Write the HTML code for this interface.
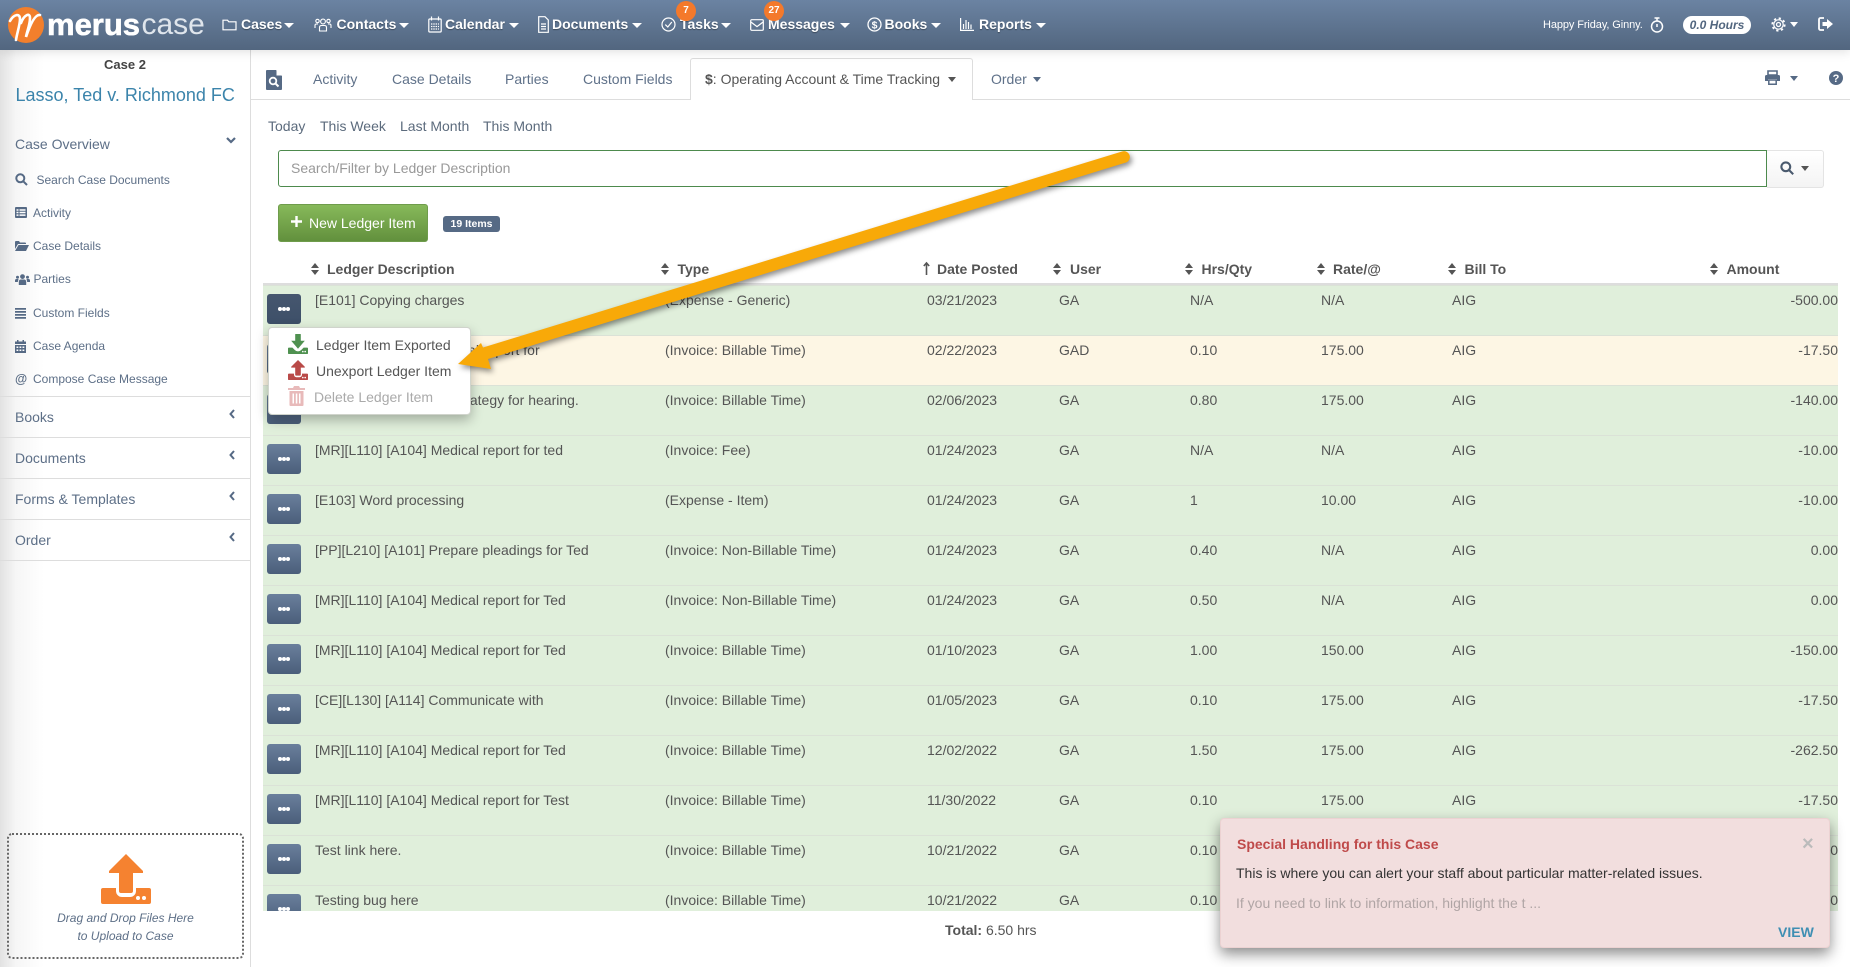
<!DOCTYPE html>
<html lang="en">
<head>
<meta charset="utf-8">
<title>MerusCase</title>
<style>
*{box-sizing:border-box}
html,body{margin:0;padding:0;width:1850px;height:967px;overflow:hidden;background:#fff;font-family:"Liberation Sans",Arial,sans-serif;font-size:14px;color:#555}
.a{position:absolute;white-space:nowrap;line-height:20px}
svg{position:absolute;overflow:visible}
#nav{position:absolute;left:0;top:0;width:1850px;height:50px;background:linear-gradient(#6b83a2,#52667f);box-shadow:0 2px 10px rgba(0,0,0,.12);z-index:3}
.n{position:absolute;top:14px;line-height:20px;color:#fff;font-weight:bold;font-size:14px;white-space:nowrap;text-shadow:0 1px 1px rgba(0,0,0,.35)}
.cw{position:absolute;width:0;height:0;border-left:5px solid transparent;border-right:5px solid transparent;border-top:5px solid #fff}
.bd{position:absolute;width:20px;height:20px;border-radius:50%;background:#f4792b;color:#fff;font-size:10px;font-weight:bold;text-align:center;line-height:20px;z-index:4}
#side{position:absolute;left:0;top:50px;width:251px;height:917px;border-right:1px solid #ddd;background:linear-gradient(90deg,#e2e2e2 0,#f6f6f6 16px,#fff 44px)}
.si{position:absolute;font-size:12px;line-height:20px;color:#5d6f87;white-space:nowrap}
.sh{position:absolute;left:15px;font-size:14px;line-height:20px;color:#5d6f87}
.ln{position:absolute;left:0;width:250px;height:1px;background:#ddd}
.tab{position:absolute;top:69px;line-height:20px;color:#5f7189;white-space:nowrap}
.q{position:absolute;top:116px;line-height:20px;color:#5c6b7d;white-space:nowrap}
.th{position:absolute;top:259px;line-height:20px;font-weight:bold;color:#555;white-space:nowrap}
#t{position:absolute;left:263px;top:285px;width:1575px;height:626px;overflow:hidden}
.r{position:relative;height:50px;background:#e0efdb;border-top:1px solid #dbe2d7}
.r.y{background:#fdf6e4}
.r span{position:absolute;top:-1px;line-height:30px;white-space:nowrap;color:#555}
.b{position:absolute;left:4px;top:8px;width:34px;height:30px;border-radius:3px;background:linear-gradient(#6a7f9c,#4a5e7a)}
.b.d{background:linear-gradient(#46576f,#3d4f68)}
.b i{position:absolute;left:11px;top:13px;width:4px;height:4px;border-radius:50%;background:#fff;box-shadow:4px 0 0 #fff,8px 0 0 #fff}
.c1{left:52px}.c2{left:402px}.c3{left:664px}.c4{left:796px}.c5{left:927px}.c6{left:1058px}.c7{left:1189px}
.r .c8{right:0}
</style>
</head>
<body>
<svg width="0" height="0" style="position:absolute">
<defs>
<symbol id="ul" viewBox="0 0 50 50"><path d="M0 36a2 2 0 0 1 2-2h13v3a6 6 0 0 0 6 6h8a6 6 0 0 0 6-6v-3h13a2 2 0 0 1 2 2v12a2 2 0 0 1-2 2H2a2 2 0 0 1-2-2z"/><path d="M25 0 L42 17 V19 H32 V37 a2 2 0 0 1-2 2 H20 a2 2 0 0 1-2-2 V19 H8 V17z"/><circle cx="37" cy="44" r="2" fill="#fff"/><circle cx="43" cy="44" r="2" fill="#fff"/></symbol>
<symbol id="dl" viewBox="0 0 50 50"><path d="M0 36a2 2 0 0 1 2-2h9l6 6a11 11 0 0 0 16 0l6-6h9a2 2 0 0 1 2 2v12a2 2 0 0 1-2 2H2a2 2 0 0 1-2-2z"/><path d="M19 0h12a1 1 0 0 1 1 1V17h10L25 37 8 17H18V1a1 1 0 0 1 1-1z"/><circle cx="37" cy="44" r="2" fill="#fff"/><circle cx="43" cy="44" r="2" fill="#fff"/></symbol>
<symbol id="sort" viewBox="0 0 8 12"><path d="M4 0 8 5H0zM4 12 0 7H8z"/></symbol>
</defs>
</svg>

<div id="nav">
  <svg style="left:8px;top:7px" width="36" height="36" viewBox="0 0 36 36"><circle cx="18" cy="18" r="18" fill="#f27f2c"/><path d="M2 14C6 7 12 6 12 12C12 18 9 26 8 33M13 16C16 8 22 5 22 11C22 18 19 24 18 30C22 18 27 7 32 8" fill="none" stroke="#fff" stroke-width="2.6" stroke-linecap="round"/></svg>
  <div style="position:absolute;left:47px;top:6px;font-size:31px;line-height:38px;font-weight:bold;color:#fff;white-space:nowrap;-webkit-text-stroke:.6px #fff">merus</div>
  <div style="position:absolute;left:141.500px;top:6px;font-size:30px;line-height:38px;color:#dfe5ec;white-space:nowrap;letter-spacing:0">case</div>

  <svg style="left:222px;top:19px" width="15" height="12" viewBox="0 0 15 12" fill="none" stroke="#fff" stroke-width="1.2"><path d="M1 1.2h4.5l1.3 1.6H14v8H1z"/></svg>
  <div class="n" style="left:241px">Cases</div><div class="cw" style="left:284px;top:23px"></div>

  <svg style="left:314px;top:18px" width="18" height="14" viewBox="0 0 18 14" fill="none" stroke="#fff" stroke-width="1.1"><circle cx="9" cy="3.5" r="2.4"/><circle cx="3.5" cy="3" r="1.7"/><circle cx="14.5" cy="3" r="1.7"/><path d="M5.5 13v-3.5q0-2 2-2h3q2 0 2 2V13zM1 10V7.5q0-1.5 1.5-1.5h1.5M17 10V7.5q0-1.5-1.5-1.5H14"/></svg>
  <div class="n" style="left:336.500px">Contacts</div><div class="cw" style="left:399px;top:23px"></div>

  <svg style="left:428px;top:16px" width="14" height="17" viewBox="0 0 14 17" fill="none" stroke="#fff" stroke-width="1.2"><rect x=".8" y="3" width="12.4" height="13" rx="1"/><path d="M3.5 .5v4M10.5 .5v4"/><path d="M3 8h8M3 10.5h8M3 13h8" stroke-dasharray="1.4 .9"/></svg>
  <div class="n" style="left:445px">Calendar</div><div class="cw" style="left:509px;top:23px"></div>

  <svg style="left:538px;top:16px" width="11" height="17" viewBox="0 0 11 17" fill="none" stroke="#fff" stroke-width="1.2"><path d="M.7.7H7l3.3 3.3v12.3H.7z"/><path d="M3 8h5M3 10.5h5M3 13h5" stroke-width="1.3"/></svg>
  <div class="n" style="left:552px">Documents</div><div class="cw" style="left:632px;top:23px"></div>

  <svg style="left:661px;top:17px" width="15" height="15" viewBox="0 0 15 15" fill="none" stroke="#fff" stroke-width="1.2"><circle cx="7.5" cy="7.5" r="6.5"/><path d="M4.3 7.6 6.8 10 10.8 5"/></svg>
  <div class="n" style="left:680px">Tasks</div><div class="cw" style="left:721px;top:23px"></div>
  <div class="bd" style="left:676px;top:1px">7</div>

  <svg style="left:750px;top:18px" width="14" height="14" viewBox="0 0 14 14" fill="none" stroke="#fff" stroke-width="1.2"><rect x=".7" y="1.7" width="12.6" height="10.6" rx="1"/><path d="M.9 4 7 8.6 13.100 4"/></svg>
  <div class="n" style="left:768px">Messages</div><div class="cw" style="left:840px;top:23px"></div>
  <div class="bd" style="left:764px;top:1px">27</div>

  <svg style="left:867px;top:17px" width="15" height="15" viewBox="0 0 15 15"><circle cx="7.5" cy="7.500" r="6.500" fill="none" stroke="#fff" stroke-width="1.300"/><text x="7.500" y="11.300" font-size="10.500" font-weight="bold" text-anchor="middle" fill="#fff" font-family="Liberation Sans">$</text></svg>
  <div class="n" style="left:884.500px">Books</div><div class="cw" style="left:931px;top:23px"></div>

  <svg style="left:960px;top:18px" width="14" height="13" viewBox="0 0 14 13" fill="none" stroke="#fff" stroke-width="1.2"><path d="M.6 0v12.400H14"/><path d="M3.500 11V6M6 11V2M8.500 11V4M11 11V6.500"/></svg>
  <div class="n" style="left:979px">Reports</div><div class="cw" style="left:1036px;top:23px"></div>

  <div class="a" style="left:1543px;top:15px;color:#fff;font-size:11px;letter-spacing:-.1px">Happy Friday, Ginny.</div>
  <svg style="left:1650px;top:17px" width="14" height="16" viewBox="0 0 14 16" fill="none" stroke="#fff" stroke-width="1.500"><circle cx="7" cy="9.500" r="5.500"/><path d="M4.500 1h5M7 1v3M7 7v3"/></svg>
  <div style="position:absolute;left:1683px;top:16px;width:68px;height:18px;border-radius:9px;background:#fff;color:#52667f;font-style:italic;font-weight:bold;font-size:12px;line-height:18px;text-align:center">0.0 Hours</div>
  <svg style="left:1771px;top:17px" width="15" height="15" viewBox="0 0 15 15" fill="none" stroke="#fff"><circle cx="7.500" cy="7.500" r="2" stroke-width="1.300"/><circle cx="7.500" cy="7.500" r="4.700" stroke-width="1.200"/><circle cx="7.500" cy="7.500" r="6.200" stroke-width="1.800" stroke-dasharray="2.200 2.670"/></svg>
  <div class="cw" style="left:1790px;top:22px;border-left-width:4px;border-right-width:4px"></div>
  <svg style="left:1818px;top:17px" width="15" height="14" viewBox="0 0 15 14"><path d="M6 1H2.500A1.500 1.500 0 0 0 1 2.500v9A1.500 1.500 0 0 0 2.500 13H6" fill="none" stroke="#fff" stroke-width="1.800"/><path d="M9 2l6 5-6 5V9H4.500V5H9z" fill="#fff"/></svg>
</div>

<div id="side">
  <div style="position:absolute;left:0;width:250px;top:5px;text-align:center;font-weight:bold;font-size:13px;line-height:20px;color:#444">Case 2</div>
  <div style="position:absolute;left:15.500px;top:34px;font-size:18px;line-height:22px;color:#3b84ab;white-space:nowrap">Lasso, Ted v. Richmond FC</div>

  <div class="sh" style="top:84px">Case Overview</div>
  <svg style="left:226px;top:87px" width="10" height="7" viewBox="0 0 10 7" fill="none" stroke="#566a85" stroke-width="2.200"><path d="M1 1l4 4 4-4"/></svg>

  <svg style="left:15px;top:123px" width="13" height="13" viewBox="0 0 13 13" fill="none" stroke="#566a85" stroke-width="2"><circle cx="5.300" cy="5.300" r="4"/><path d="M8.300 8.300 12 12"/></svg>
  <div class="si" style="left:36.500px;top:120px">Search Case Documents</div>

  <svg style="left:15px;top:157px" width="12" height="11" viewBox="0 0 12 11"><rect width="12" height="11" rx="1" fill="#566a85"/><path d="M1.500 2.200h2v1.500h-2zM4.500 2.200h6v1.500h-6zM1.500 4.800h2v1.500h-2zM4.500 4.800h6v1.500h-6zM1.500 7.400h2v1.500h-2zM4.500 7.400h6v1.500h-6z" fill="#fff"/></svg>
  <div class="si" style="left:33px;top:153px">Activity</div>

  <svg style="left:15px;top:191px" width="14" height="10" viewBox="0 0 14 10" fill="#566a85"><path d="M0 1q0-1 1-1h3l1 1.500h5q1 0 1 1v.5H3L0 8z"/><path d="M3.500 4H14l-3 6H0z"/></svg>
  <div class="si" style="left:33px;top:186px">Case Details</div>

  <svg style="left:15px;top:224px" width="15" height="11" viewBox="0 0 15 11" fill="#566a85"><circle cx="7.500" cy="2.600" r="2.400"/><circle cx="2.500" cy="3.200" r="1.500"/><circle cx="12.500" cy="3.200" r="1.500"/><path d="M3.800 11V8q0-2.500 2.200-2.500h3q2.200 0 2.200 2.500v3zM0 8V6.500q0-1.500 1.500-1.500h2L2.800 8zM15 8V6.500Q15 5 13.500 5h-2l.7 3z"/></svg>
  <div class="si" style="left:33.500px;top:219px">Parties</div>

  <svg style="left:15px;top:258px" width="11" height="11" viewBox="0 0 11 11" fill="#566a85"><path d="M0 0h11v1.700H0zM0 3h11v1.700H0zM0 6h11v1.700H0zM0 9h11v1.700H0z"/></svg>
  <div class="si" style="left:33px;top:253px">Custom Fields</div>

  <svg style="left:15px;top:290px" width="11" height="13" viewBox="0 0 11 13" fill="#566a85"><path d="M2 0h1.500v2H2zM7.500 0H9v2H7.500zM0 1.500h11V4H0zM0 5h11v8H0z"/><path d="M1.500 6.500h1.800v1.500H1.500zM4.500 6.500h1.800v1.500H4.500zM7.500 6.500h1.800v1.500H7.500zM1.500 9.500h1.800v1.500H1.500zM4.500 9.500h1.800v1.500H4.500zM7.500 9.500h1.800v1.500H7.500z" fill="#fff"/></svg>
  <div class="si" style="left:33px;top:286px">Case Agenda</div>

  <div class="si" style="left:15px;top:319px;font-weight:bold;font-size:12.500px">@</div>
  <div class="si" style="left:33px;top:319px">Compose Case Message</div>

  <div class="ln" style="top:346px"></div>
  <div class="sh" style="top:357px">Books</div>
  <div class="ln" style="top:387px"></div>
  <div class="sh" style="top:398px">Documents</div>
  <div class="ln" style="top:428px"></div>
  <div class="sh" style="top:439px">Forms &amp; Templates</div>
  <div class="ln" style="top:469px"></div>
  <div class="sh" style="top:480px">Order</div>
  <div class="ln" style="top:510px"></div>
  <svg style="left:229px;top:359px" width="6" height="10" viewBox="0 0 6 10" fill="none" stroke="#566a85" stroke-width="2"><path d="M5 1 1.500 5 5 9"/></svg>
  <svg style="left:229px;top:400px" width="6" height="10" viewBox="0 0 6 10" fill="none" stroke="#566a85" stroke-width="2"><path d="M5 1 1.500 5 5 9"/></svg>
  <svg style="left:229px;top:441px" width="6" height="10" viewBox="0 0 6 10" fill="none" stroke="#566a85" stroke-width="2"><path d="M5 1 1.500 5 5 9"/></svg>
  <svg style="left:229px;top:482px" width="6" height="10" viewBox="0 0 6 10" fill="none" stroke="#566a85" stroke-width="2"><path d="M5 1 1.500 5 5 9"/></svg>

  <div style="position:absolute;left:7px;top:783px;width:237px;height:126px;border:2px dotted #666;border-radius:5px"></div>
  <svg style="left:101px;top:804px" width="50" height="50" fill="#f58230"><use href="#ul"/></svg>
  <div style="position:absolute;left:7px;width:237px;top:859px;text-align:center;font-style:italic;font-size:12px;line-height:18px;color:#5d6f87">Drag and Drop Files Here<br>to Upload to Case</div>
</div>

<!-- sub tabs -->
<div style="position:absolute;left:251px;top:99px;width:1599px;height:1px;background:#ddd"></div>
<div style="position:absolute;left:690px;top:58px;width:283px;height:42px;background:#fff;border:1px solid #ddd;border-bottom:0;border-radius:3px 3px 0 0"></div>
<svg style="left:266px;top:70px" width="16" height="20" viewBox="0 0 16 20"><path d="M0 1q0-1 1-1h9l6 6v13q0 1-1 1H1q-1 0-1-1z" fill="#566a85"/><circle cx="7" cy="11" r="3.300" fill="none" stroke="#fff" stroke-width="1.800"/><path d="M9.500 13.500 12.500 16.500" stroke="#fff" stroke-width="2"/><path d="M10.500 0 16 5.500H10.500z" fill="#fff"/></svg>
<div class="tab" style="left:313px">Activity</div>
<div class="tab" style="left:392px">Case Details</div>
<div class="tab" style="left:505px">Parties</div>
<div class="tab" style="left:583px">Custom Fields</div>
<div class="tab" style="left:705px;color:#555"><b>$</b>: Operating Account &amp; Time Tracking</div>
<div class="cw" style="left:948px;top:77px;border-top-color:#555;border-left-width:4.500px;border-right-width:4.500px"></div>
<div class="tab" style="left:991px">Order</div>
<div class="cw" style="left:1033px;top:77px;border-top-color:#566a85;border-left-width:4.500px;border-right-width:4.500px"></div>
<svg style="left:1765px;top:71px" width="15" height="14" viewBox="0 0 15 14" fill="#566a85"><path d="M3 0h9v4H3z" fill="none" stroke="#566a85" stroke-width="1.600"/><path d="M1.500 4h12Q15 4 15 5.500V10H12V8H3v2H0V5.500Q0 4 1.500 4z"/><path d="M3.800 9h7.400v4.300H3.800z" fill="none" stroke="#566a85" stroke-width="1.500"/></svg>
<div class="cw" style="left:1790px;top:76px;border-top-color:#566a85;border-left-width:4.500px;border-right-width:4.500px"></div>
<svg style="left:1829px;top:71px" width="14" height="14" viewBox="0 0 14 14"><circle cx="7" cy="7" r="7" fill="#566a85"/><text x="7" y="11" font-size="11" font-weight="bold" text-anchor="middle" fill="#fff" font-family="Liberation Sans">?</text></svg>

<div class="q" style="left:268px">Today</div>
<div class="q" style="left:320px">This Week</div>
<div class="q" style="left:400px">Last Month</div>
<div class="q" style="left:483px">This Month</div>

<!-- search -->
<div style="position:absolute;left:278px;top:150px;width:1489px;height:37px;border:1px solid #4d8a4d;border-radius:3px 0 0 3px;background:#fff;color:#999;line-height:35px;padding-left:12px">Search/Filter by Ledger Description</div>
<div style="position:absolute;left:1767px;top:150px;width:57px;height:38px;border:1px solid #e4e4e4;border-left:0;border-radius:0 3px 3px 0;background:linear-gradient(#fff,#f4f4f4)"></div>
<svg style="left:1780px;top:161px" width="14" height="14" viewBox="0 0 14 14" fill="none" stroke="#4a5a6e" stroke-width="2.100"><circle cx="5.800" cy="5.800" r="4.400"/><path d="M9 9l4.200 4.200"/></svg>
<div class="cw" style="left:1801px;top:166px;border-top-color:#555;border-left-width:4.500px;border-right-width:4.500px"></div>

<!-- new button -->
<div style="position:absolute;left:278px;top:204px;width:150px;height:38px;border-radius:3px;background:linear-gradient(#87b95a,#62903d);border:1px solid #6f9c4c;color:#fff;line-height:36px;padding-left:30px;white-space:nowrap">New Ledger Item</div>
<svg style="left:291px;top:216px" width="11" height="11" viewBox="0 0 11 11"><path d="M4.300 0h2.400v4.300H11v2.400H6.700V11H4.300V6.700H0V4.300h4.300z" fill="#fff"/></svg>
<div style="position:absolute;left:443px;top:216px;width:57px;height:16px;border-radius:3px;background:#566a85;color:#fff;font-weight:bold;font-size:10.500px;line-height:16px;text-align:center">19 Items</div>

<!-- header -->
<svg style="left:311px;top:263px" width="8" height="12" fill="#555"><use href="#sort"/></svg><div class="th" style="left:327px">Ledger Description</div>
<svg style="left:661px;top:263px" width="8" height="12" fill="#555"><use href="#sort"/></svg><div class="th" style="left:677.500px">Type</div>
<svg style="left:923px;top:262px" width="7" height="13" viewBox="0 0 7 13" fill="none" stroke="#555" stroke-width="1.600"><path d="M3.500 13V1.500M.8 4 3.500 1 6.200 4"/></svg><div class="th" style="left:937px">Date Posted</div>
<svg style="left:1053px;top:263px" width="8" height="12" fill="#555"><use href="#sort"/></svg><div class="th" style="left:1070px">User</div>
<svg style="left:1185px;top:263px" width="8" height="12" fill="#555"><use href="#sort"/></svg><div class="th" style="left:1201.500px">Hrs/Qty</div>
<svg style="left:1317px;top:263px" width="8" height="12" fill="#555"><use href="#sort"/></svg><div class="th" style="left:1333px">Rate/@</div>
<svg style="left:1448px;top:263px" width="8" height="12" fill="#555"><use href="#sort"/></svg><div class="th" style="left:1464.500px">Bill To</div>
<svg style="left:1710px;top:263px" width="8" height="12" fill="#555"><use href="#sort"/></svg><div class="th" style="left:1726.500px">Amount</div>
<div style="position:absolute;left:263px;top:283px;width:1575px;height:2px;background:#ddd"></div>

<!-- rows -->
<div id="t">
<div class="r"><div class="b d"><i></i></div><span class="c1">[E101] Copying charges</span><span class="c2">(Expense - Generic)</span><span class="c3">03/21/2023</span><span class="c4">GA</span><span class="c5">N/A</span><span class="c6">N/A</span><span class="c7">AIG</span><span class="c8">-500.00</span></div>
<div class="r y"><div class="b"><i></i></div><span class="c1">[MR][L110] [A104] Medical report for</span><span class="c2">(Invoice: Billable Time)</span><span class="c3">02/22/2023</span><span class="c4">GAD</span><span class="c5">0.10</span><span class="c6">175.00</span><span class="c7">AIG</span><span class="c8">-17.50</span></div>
<div class="r"><div class="b"><i></i></div><span class="c1">[CE][L120] [A106] Set strategy for hearing.</span><span class="c2">(Invoice: Billable Time)</span><span class="c3">02/06/2023</span><span class="c4">GA</span><span class="c5">0.80</span><span class="c6">175.00</span><span class="c7">AIG</span><span class="c8">-140.00</span></div>
<div class="r"><div class="b"><i></i></div><span class="c1">[MR][L110] [A104] Medical report for ted</span><span class="c2">(Invoice: Fee)</span><span class="c3">01/24/2023</span><span class="c4">GA</span><span class="c5">N/A</span><span class="c6">N/A</span><span class="c7">AIG</span><span class="c8">-10.00</span></div>
<div class="r"><div class="b"><i></i></div><span class="c1">[E103] Word processing</span><span class="c2">(Expense - Item)</span><span class="c3">01/24/2023</span><span class="c4">GA</span><span class="c5">1</span><span class="c6">10.00</span><span class="c7">AIG</span><span class="c8">-10.00</span></div>
<div class="r"><div class="b"><i></i></div><span class="c1">[PP][L210] [A101] Prepare pleadings for Ted</span><span class="c2">(Invoice: Non-Billable Time)</span><span class="c3">01/24/2023</span><span class="c4">GA</span><span class="c5">0.40</span><span class="c6">N/A</span><span class="c7">AIG</span><span class="c8">0.00</span></div>
<div class="r"><div class="b"><i></i></div><span class="c1">[MR][L110] [A104] Medical report for Ted</span><span class="c2">(Invoice: Non-Billable Time)</span><span class="c3">01/24/2023</span><span class="c4">GA</span><span class="c5">0.50</span><span class="c6">N/A</span><span class="c7">AIG</span><span class="c8">0.00</span></div>
<div class="r"><div class="b"><i></i></div><span class="c1">[MR][L110] [A104] Medical report for Ted</span><span class="c2">(Invoice: Billable Time)</span><span class="c3">01/10/2023</span><span class="c4">GA</span><span class="c5">1.00</span><span class="c6">150.00</span><span class="c7">AIG</span><span class="c8">-150.00</span></div>
<div class="r"><div class="b"><i></i></div><span class="c1">[CE][L130] [A114] Communicate with</span><span class="c2">(Invoice: Billable Time)</span><span class="c3">01/05/2023</span><span class="c4">GA</span><span class="c5">0.10</span><span class="c6">175.00</span><span class="c7">AIG</span><span class="c8">-17.50</span></div>
<div class="r"><div class="b"><i></i></div><span class="c1">[MR][L110] [A104] Medical report for Ted</span><span class="c2">(Invoice: Billable Time)</span><span class="c3">12/02/2022</span><span class="c4">GA</span><span class="c5">1.50</span><span class="c6">175.00</span><span class="c7">AIG</span><span class="c8">-262.50</span></div>
<div class="r"><div class="b"><i></i></div><span class="c1">[MR][L110] [A104] Medical report for Test</span><span class="c2">(Invoice: Billable Time)</span><span class="c3">11/30/2022</span><span class="c4">GA</span><span class="c5">0.10</span><span class="c6">175.00</span><span class="c7">AIG</span><span class="c8">-17.50</span></div>
<div class="r"><div class="b"><i></i></div><span class="c1">Test link here.</span><span class="c2">(Invoice: Billable Time)</span><span class="c3">10/21/2022</span><span class="c4">GA</span><span class="c5">0.10</span><span class="c6">175.00</span><span class="c7">AIG</span><span class="c8">-17.50</span></div>
<div class="r"><div class="b"><i></i></div><span class="c1">Testing bug here</span><span class="c2">(Invoice: Billable Time)</span><span class="c3">10/21/2022</span><span class="c4">GA</span><span class="c5">0.10</span><span class="c6">175.00</span><span class="c7">AIG</span><span class="c8">-17.50</span></div>
</div>

<div class="a" style="left:945px;top:920px;color:#555"><b>Total:</b> 6.50 hrs</div>

<!-- dropdown -->
<div style="position:absolute;left:268px;top:327px;width:203px;height:88px;background:#fff;border:1px solid #d0d4cc;border-radius:4px;box-shadow:0 5px 12px rgba(0,0,0,.28)"></div>
<svg style="left:288px;top:334px" width="20" height="20" fill="#4f9150"><use href="#dl"/></svg>
<svg style="left:288px;top:360px" width="20" height="20" fill="#b94a48"><use href="#ul"/></svg>
<svg style="left:288px;top:386px" width="17" height="20" viewBox="0 0 17 20" fill="#e8baba"><path d="M6 0h5l1 2h5v2H0V2h5z"/><path d="M1.500 5h14v14q0 1-1 1h-12q-1 0-1-1zM4.500 7.500v10h1.500v-10zM7.800 7.500v10h1.500v-10zM11 7.500v10h1.500v-10z" fill-rule="evenodd"/></svg>
<div class="a" style="left:316px;top:335px;color:#555">Ledger Item Exported</div>
<div class="a" style="left:316px;top:361px;color:#555">Unexport Ledger Item</div>
<div class="a" style="left:314px;top:387px;color:#aaa">Delete Ledger Item</div>

<!-- arrow -->
<svg style="left:0;top:0;z-index:5;filter:drop-shadow(2px 3px 3px rgba(0,0,0,.45))" width="1850" height="967" viewBox="0 0 1850 967">
<path d="M1122 151.500 L483 347.500 L481 343 L458 364 L491 369 L488 359 L1126 162.500 A5.800 5.800 0 0 0 1122 151.500 Z" fill="#f8a908"/>
</svg>

<!-- toast -->
<div style="position:absolute;left:1220px;top:818px;width:610px;height:130px;background:#f2dede;border:1px solid #ecd2d2;border-radius:4px;box-shadow:0 6px 14px rgba(0,0,0,.45);z-index:6">
  <div class="a" style="left:16px;top:15px;color:#bf4a4a;font-weight:bold">Special Handling for this Case</div>
  <div class="a" style="left:581px;top:15px;color:#bbb;font-weight:bold;font-size:20px">×</div>
  <div class="a" style="left:15px;top:44px;color:#333">This is where you can alert your staff about particular matter-related issues.</div>
  <div class="a" style="left:15px;top:74px;color:#b0a5a5">If you need to link to information, highlight the t ...</div>
  <div class="a" style="left:557px;top:103px;color:#3f8fb3;font-weight:bold">VIEW</div>
</div>
</body>
</html>
